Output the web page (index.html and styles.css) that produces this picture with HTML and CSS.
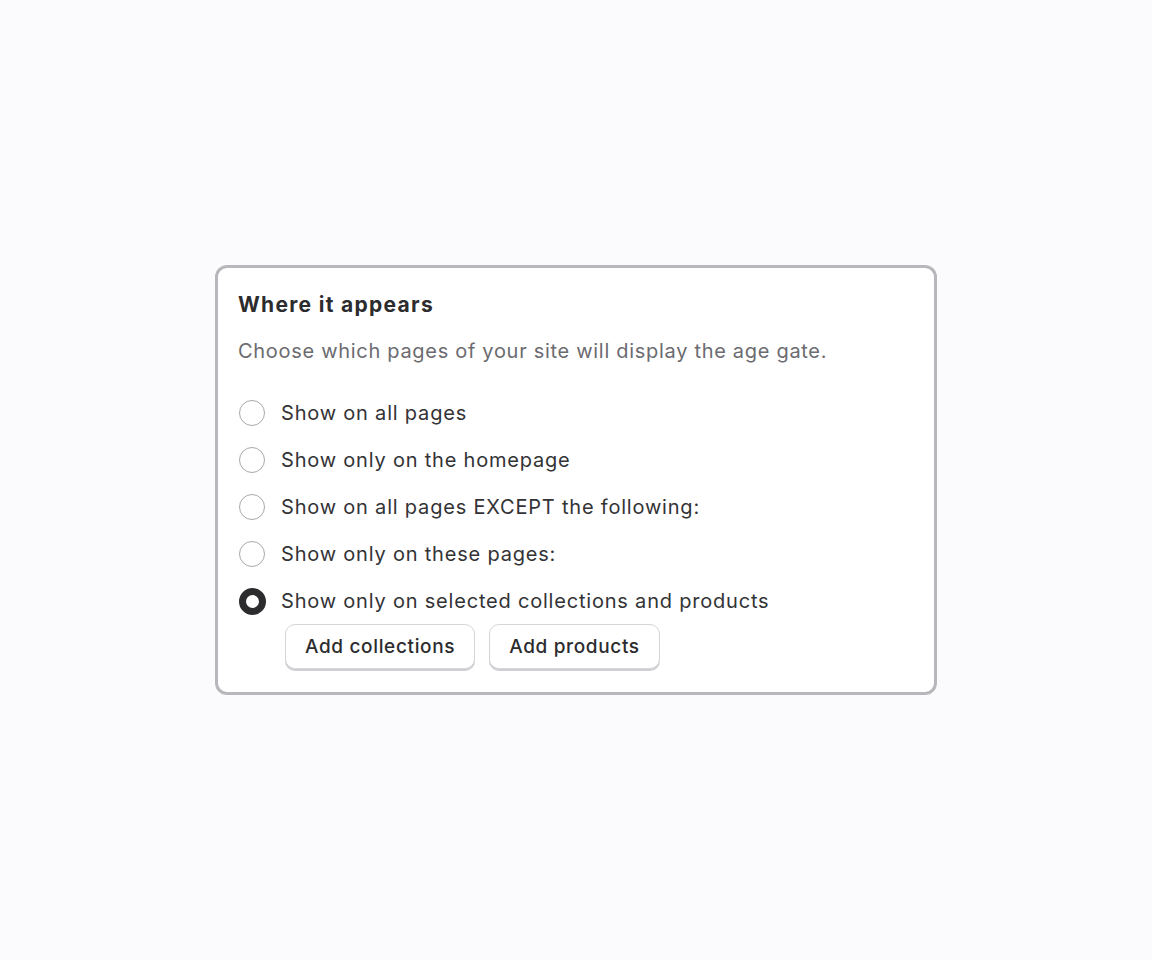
FILE: index.html
```html
<!DOCTYPE html>
<html lang="en">
<head>
  <meta charset="UTF-8" />
  <title>Where it appears</title>
  <link rel="stylesheet" href="styles.css">
</head>
<body>
  <div class="card">
    <h2 class="card-title">Where it appears</h2>
    <p class="card-desc">Choose which pages of your site will display the age gate.</p>
    <div class="options">
      <label class="option"><span class="radio"></span>Show on all pages</label>
      <label class="option"><span class="radio"></span>Show only on the homepage</label>
      <label class="option"><span class="radio"></span>Show on all pages EXCEPT the following:</label>
      <label class="option"><span class="radio"></span>Show only on these pages:</label>
      <label class="option"><span class="radio checked"></span>Show only on selected collections and products</label>
    </div>
    <div class="actions">
      <button class="btn">Add collections</button>
      <button class="btn">Add products</button>
    </div>
  </div>
</body>
</html>
```

FILE: styles.css
```css
body {
  margin: 0;
  font-family: Inter, "Noto Sans", sans-serif;
  background: #fbfafc;
  display: flex;
  justify-content: center;
  align-items: flex-start;
  height: 100vh;
}

.card {
  margin-top: 265px;
  width: 676px;
  background: #fff;
  border: 3px solid #b8b7bb;
  border-radius: 12px;
  padding: 22px 20px 23px;
}

.card-title {
  margin: 0;
  font-size: 21px;
  font-weight: 700;
  letter-spacing: 1.3px;
  color: #2c2c2e;
  line-height: 30px;
}

.card-desc {
  margin: 18px 0 0;
  font-size: 20px;
  letter-spacing: 0.7px;
  color: #6b6b70;
  line-height: 26px;
}

.options {
  margin-top: 35px;
  display: flex;
  flex-direction: column;
  gap: 19px;
}

.option {
  display: flex;
  align-items: center;
  gap: 16px;
  font-size: 20px;
  letter-spacing: 0.8px;
  color: #333336;
  line-height: 28px;
}

.radio {
  width: 26px;
  height: 26px;
  border: 1.5px solid #a9a9ae;
  border-radius: 50%;
  box-sizing: border-box;
  flex-shrink: 0;
  margin-left: 1px;
}

.radio.checked {
  border: 7px solid #2c2c2e;
  width: 27px;
  height: 27px;
  margin-right: -1px;
}

.actions {
  margin-top: 9px;
  margin-left: 47px;
  display: flex;
  gap: 14px;
}

.btn {
  font-family: inherit;
  font-size: 19px;
  font-weight: 500;
  letter-spacing: 0.65px;
  color: #2c2c2e;
  background: #fff;
  border: 1px solid #d6d6da;
  border-radius: 10px;
  box-shadow: 0 2px 0 #cfcfd3;
  padding: 0 19px;
  height: 45px;
  cursor: pointer;
}
```
